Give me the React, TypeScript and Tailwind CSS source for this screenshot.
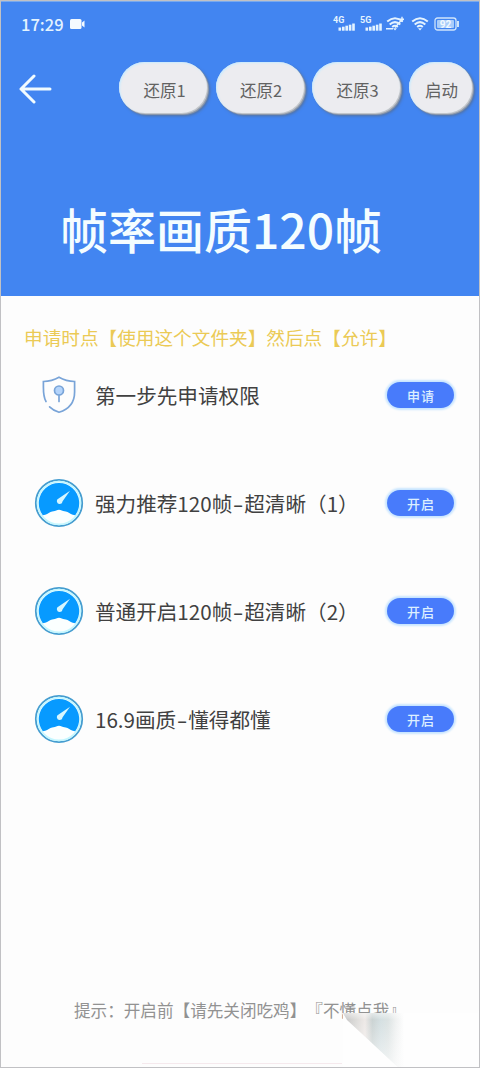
import { clsx } from "clsx";

type Feature = { title: string[]; action: string; icon: "shield" | "gauge" };

const restoreButtons = ["还原1", "还原2", "还原3"];

const features: Feature[] = [
  { title: ["第一步先申请权限"], action: "申请", icon: "shield" },
  { title: ["强力推荐120帧", "超清晰（1）"], action: "开启", icon: "gauge" },
  { title: ["普通开启120帧", "超清晰（2）"], action: "开启", icon: "gauge" },
  { title: ["16.9画质", "懂得都懂"], action: "开启", icon: "gauge" },
];

function Signal({ label }: { label: string }) {
  return (
    <svg width="22" height="16" viewBox="0 0 22 16" fill="#e4f3ff">
      <text x="0" y="7.2" fontSize="9" fontWeight="700" fontFamily="Roboto, sans-serif">
        {label}
      </text>
      <rect x="5.5" y="11.5" width="2.6" height="3.2" />
      <rect x="9" y="10.7" width="2.6" height="4" />
      <rect x="12.4" y="9.7" width="2.6" height="5" />
      <rect x="15.8" y="8.7" width="2.6" height="6" />
      <rect x="19.2" y="7.5" width="2.6" height="7.2" />
    </svg>
  );
}

function Wifi({ linked }: { linked?: boolean }) {
  return (
    <svg width="18" height="16" viewBox="0 0 18 16" fill="none" stroke="#e4f3ff" strokeWidth="2">
      <path d="M1.2 5.6Q9-1 16.8 5.6M3.7 8.4Q9 3.8 14.3 8.4M6.2 11Q9 8.6 11.8 11" />
      <path d="M7 12.2h4L9 14.6z" fill="#e4f3ff" stroke="none" />
      {linked && <path d="M0 12.8h7M9 11.5l7-8M16 .8v5M13.5 3.3h4.5" strokeWidth="1.4" />}
    </svg>
  );
}

function StatusBar() {
  return (
    <div className="flex h-[44px] items-center pl-5 pr-[19px] text-[#e4f3ff]">
      <span className="w-[42px] whitespace-nowrap text-[16.5px] font-medium leading-none">17:29</span>
      <svg className="ml-[7px]" width="15" height="10" viewBox="0 0 15 10" fill="#f4faff">
        <rect width="11.5" height="10" rx="1.5" />
        <path d="M12 3.5l2.5-2v7l-2.5-2z" />
      </svg>
      <div className="ml-auto flex items-center">
        <Signal label="4G" />
        <span className="w-[5px]" />
        <Signal label="5G" />
        <span className="w-1" />
        <Wifi linked />
        <span className="w-[7px]" />
        <Wifi />
        <svg className="ml-[5px]" width="26" height="14" viewBox="0 0 26 14" fill="none" stroke="#cfe4fb" strokeWidth="1.3">
          <rect x="1" y="1" width="21" height="12" rx="2.5" />
          <rect x="3" y="3" width="17" height="8" rx="1" fill="#a9cdfa" stroke="none" />
          <path d="M24 4v6" strokeWidth="2" />
          <text x="11.5" y="10.8" textAnchor="middle" fontSize="10" fontWeight="700" fill="#f0f8ff" stroke="none" fontFamily="Roboto, sans-serif">
            92
          </text>
        </svg>
      </div>
    </div>
  );
}

function HeaderButton({ label, compact }: { label: string; compact?: boolean }) {
  return (
    <button
      className={clsx(
        "h-[51px] shrink-0 rounded-[26px] bg-[#ececf0] pl-[3px] pt-1.5 text-[16.5px] leading-none text-[#626262] shadow-[inset_1px_1px_2px_#c8ebff,1px_1px_0_#c2c5ca,2px_2px_1px_#929dad,3px_3px_3px_#516f9e]",
        compact ? "w-[63px]" : "w-[88px]"
      )}
    >
      {label}
    </button>
  );
}

function ShieldIcon() {
  return (
    <svg width="50" height="50" viewBox="0 0 50 50" fill="none" stroke="#79a4d8" strokeWidth="1.7" strokeLinecap="round">
      <path d="M12 31.5C9.8 27.8 9.4 23 9.4 17V11.5Q18 11.3 25 7.3Q32 11.3 40.6 11.5V22C40.6 33.5 34 39.5 25 42.3C21 41 18 39.2 15.6 36.8" />
      <circle cx="25" cy="20.5" r="4.5" fill="#b4d4fb" />
      <path d="M25 25.5v6" />
    </svg>
  );
}

function GaugeIcon() {
  return (
    <svg width="50" height="50" viewBox="0 0 50 50">
      <circle cx="25" cy="25" r="23.2" fill="#fbffff" stroke="#459dd0" strokeWidth="1.8" />
      <circle cx="25" cy="25" r="21.4" fill="none" stroke="#c4f7ff" strokeWidth="1.6" />
      <path d="M8.8 37.2A20.2 20.2 0 1 1 41.2 37.2C37.5 36.8 36 35.2 33.5 34C31 32.8 29.8 33.5 27.8 32.4C26 31.4 24 31.4 22.2 32.4C20.2 33.5 19 32.8 16.5 34C14 35.2 12.5 36.8 8.8 37.2Z" fill="#079aff" />
      <path d="M36 12.8L28.6 23.2A2.9 2.9 0 1 1 24.6 20.4Z" fill="#d6f6ff" />
    </svg>
  );
}

function FeatureRow({ feature }: { feature: Feature }) {
  return (
    <div className="flex h-[50px] items-center">
      {feature.icon === "shield" ? <ShieldIcon /> : <GaugeIcon />}
      <div className="ml-[11px] flex whitespace-nowrap text-[20.6px] leading-none text-[#414141]">
        <span>{feature.title[0]}</span>
        {feature.title[1] && (
          <>
            <span className="inline-block w-3 scale-x-150 text-center">-</span>
            <span>{feature.title[1]}</span>
          </>
        )}
      </div>
      <button className="ml-auto h-[26px] w-[67px] rounded-full bg-[#487bfb] pl-px text-[13px] font-medium leading-none tracking-[1px] text-[#ddefff] shadow-[0_0_2px_2px_#c8e5ff]">
        {feature.action}
      </button>
    </div>
  );
}

// translucent page curl in the lower right corner
function CornerFold() {
  return (
    <svg className="absolute bottom-0 right-0" width="140" height="57" viewBox="0 0 140 57">
      <defs>
        <linearGradient id="fold" x1="0" x2="1" y1="0" y2="0">
          <stop offset="0" stopColor="#c4c4c4" />
          <stop offset="0.22" stopColor="#dddcda" />
          <stop offset="0.36" stopColor="#eee9e7" />
          <stop offset="0.48" stopColor="#cbd3d3" />
          <stop offset="0.62" stopColor="#d5e0e2" />
          <stop offset="0.74" stopColor="#dce3e3" />
          <stop offset="0.86" stopColor="#eff1f1" />
          <stop offset="1" stopColor="#fefefe" />
        </linearGradient>
        <linearGradient id="fade" x1="0" x2="0" y1="0" y2="1">
          <stop offset="0" stopColor="#fefefe" stopOpacity="0.5" />
          <stop offset="0.12" stopColor="#fefefe" stopOpacity="0" />
          <stop offset="1" stopColor="#fefefe" stopOpacity="0.65" />
        </linearGradient>
      </defs>
      <path d="M2 2H138V0H140V57H3V4Z" fill="#fefefe" />
      <path d="M3 2H64V57H59L7 9Z" fill="url(#fold)" />
      <path d="M3 2H64V57H59L7 9Z" fill="url(#fade)" />
    </svg>
  );
}

export default function App() {
  return (
    <div className="relative flex h-[1068px] w-[480px] flex-col overflow-hidden border border-[#c1c1c4] bg-[#fdfdfd] font-['Noto_Sans_CJK_SC',sans-serif] [text-spacing-trim:space-all]">
      <header className="h-[295px] shrink-0 border-t border-[#78a9ef] bg-[#4285f1]">
        <StatusBar />
        <div className="flex items-center pl-[18px] pt-4">
          <svg className="mt-0.5" width="33" height="30" viewBox="0 0 33 30" fill="none" stroke="#f1fbff" strokeWidth="3" strokeLinecap="round" strokeLinejoin="round">
            <path d="M31 15H2M15 2L2 15L15 28" />
          </svg>
          <div className="ml-[67px] flex gap-[8.5px]">
            {restoreButtons.map((label) => (
              <HeaderButton key={label} label={label} />
            ))}
            <HeaderButton label="启动" compact />
          </div>
        </div>
        <h1 className="ml-[59px] mt-[89px] whitespace-nowrap text-[48px] font-medium leading-[52px] text-[#f4fdff]">
          帧率画质120帧
        </h1>
      </header>
      <main className="px-[23px] pt-[29px]">
        <p className="whitespace-nowrap text-[18.65px] leading-6 text-[#ebca55]">
          申请时点【使用这个文件夹】然后点【允许】
        </p>
        <div className="mt-[21px] flex flex-col gap-[58px] pl-[10px] pr-[2px]">
          {features.map((feature) => (
            <FeatureRow key={feature.title.join()} feature={feature} />
          ))}
        </div>
      </main>
      <footer className="mt-auto flex flex-col pb-[3px]">
        <p className="ml-[73px] whitespace-nowrap text-[16.6px] leading-6 text-[#929292]">
          提示：开启前【请先关闭吃鸡】『不懂点我』
        </p>
        <div className="ml-[141px] mt-[41px] h-px w-[200px] bg-[#f5e9ed]" />
      </footer>
      <div className="absolute -bottom-px -right-px">
        <CornerFold />
      </div>
    </div>
  );
}
